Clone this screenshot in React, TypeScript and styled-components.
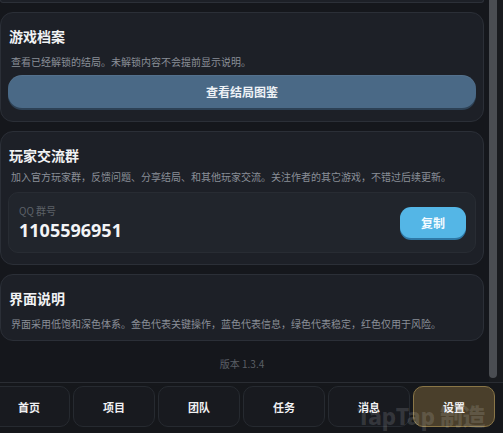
import React from "react";
import styled, { createGlobalStyle } from "styled-components";

const Global = createGlobalStyle`
  html, body { margin: 0; padding: 0; background: #15171c; }
  body { font-family: "Noto Sans CJK SC", "Noto Sans", sans-serif; color: #eef0f3; }
  * { box-sizing: border-box; }
`;

const Page = styled.div`
  width: 503px;
  height: 433px;
  display: flex;
  flex-direction: column;
  background: #15171c;
  position: relative;
  overflow: hidden;
`;

const Body = styled.div`
  height: 382px;
  display: flex;
`;

const Scroller = styled.main`
  flex: 1;
  overflow: hidden;
`;

const Rail = styled.div`
  width: 17px;
  padding: 0 6px 0 3px;
  background: linear-gradient(to right, #15171c 3px, #191b1f 3px);
`;

const Thumb = styled.div`
  height: 378px;
  background: #4a4d52;
  border-radius: 0 0 6px 6px;
`;

const Stack = styled.div`
  display: flex;
  flex-direction: column;
  gap: 9px;
  padding: 0 2px 17px 0;
`;

const CardTail = styled.div`
  height: 3px;
  border: 1px solid #2c3038;
  border-top: none;
  border-radius: 0 0 12px 12px;
  background: #1d2027;
`;

const Card = styled.section`
  background: #1d2027;
  border: 1px solid #2b2f37;
  border-radius: 13px;
  padding: 13px 7px 9px;
  display: flex;
  flex-direction: column;
`;

const Title = styled.h2`
  margin: 0 0 0 1px;
  font-size: 14px;
  line-height: 20px;
  font-weight: 700;
  color: #f1f2f4;
`;

const Desc = styled.p<{ $gap: number }>`
  margin: ${(p) => p.$gap}px 0 0 3px;
  font-size: 10px;
  line-height: 14px;
  color: #8a8f97;
`;

const WideButton = styled.button`
  margin-top: 6px;
  margin-bottom: 4px;
  height: 33px;
  border: none;
  border-radius: 14px;
  background: #4a6986;
  box-shadow: 0 2px 0 #2d4155, inset 0 1px 0 rgba(255,255,255,0.06);
  color: #eef2f6;
  font-family: inherit;
  font-size: 12px;
  font-weight: 700;
  cursor: pointer;
`;

const QQBox = styled.div`
  margin-top: 8px;
  margin-bottom: 2px;
  height: 61px;
  background: #21252c;
  border: 1px solid #282c33;
  border-radius: 10px;
  display: flex;
  align-items: center;
  justify-content: space-between;
  padding: 0 9px 0 10px;
`;

const QQInfo = styled.div`
  display: flex;
  flex-direction: column;
`;

const QQLabel = styled.span`
  font-size: 10px;
  line-height: 14px;
  color: #5c6168;
`;

const QQNumber = styled.span`
  font-size: 18px;
  line-height: 24px;
  font-weight: 700;
  color: #f3f4f6;
  font-family: "Noto Sans", "Noto Sans CJK SC", sans-serif;
`;

const CopyButton = styled.button`
  width: 66px;
  height: 31px;
  margin-bottom: 1px;
  border: none;
  border-radius: 11px;
  background: #54b6e6;
  box-shadow: 0 2px 0 #2e78a6;
  color: #f4fbff;
  font-family: inherit;
  font-size: 12px;
  font-weight: 700;
`;

const Version = styled.div`
  margin-top: 7px;
  text-align: center;
  font-size: 10px;
  line-height: 14px;
  color: #5b5f66;
`;

const Nav = styled.nav`
  flex: 1;
  border-top: 1px solid #2a2d33;
  background: #15171b;
  overflow: hidden;
  padding: 3px 0 6px;
`;

const NavGrid = styled.div`
  margin-left: -12px;
  width: 507px;
  height: 41px;
  display: grid;
  grid-template-columns: repeat(6, 1fr);
  gap: 3px;
`;

const NavButton = styled.button<{ $active?: boolean }>`
  border-radius: 10px;
  border: 1px solid ${(p) => (p.$active ? "#8a7647" : "#262a30")};
  background: ${(p) => (p.$active ? "#4a3f2b" : "#181a1f")};
  color: #f0f1f3;
  font-family: inherit;
  font-size: 11px;
  font-weight: 700;
  padding: 0;
`;

const Watermark = styled.div`
  position: absolute;
  left: 357px;
  top: 398px;
  font-family: "Noto Sans", "Noto Sans CJK SC", sans-serif;
  font-size: 23px;
  font-weight: 800;
  letter-spacing: -0.5px;
  color: rgba(255, 255, 255, 0.13);
  pointer-events: none;
  white-space: nowrap;
`;

const tabs = ["首页", "项目", "团队", "任务", "消息", "设置"];

export default function App() {
  return (
    <>
      <Global />
      <Page>
        <Body>
          <Scroller>
            <Stack>
              <CardTail />
              <Card>
                <Title>游戏档案</Title>
                <Desc $gap={9}>查看已经解锁的结局。未解锁内容不会提前显示说明。</Desc>
                <WideButton>查看结局图鉴</WideButton>
              </Card>
              <Card>
                <Title>玩家交流群</Title>
                <Desc $gap={5}>加入官方玩家群，反馈问题、分享结局、和其他玩家交流。关注作者的其它游戏，不错过后续更新。</Desc>
                <QQBox>
                  <QQInfo>
                    <QQLabel>QQ 群号</QQLabel>
                    <QQNumber>1105596951</QQNumber>
                  </QQInfo>
                  <CopyButton>复制</CopyButton>
                </QQBox>
              </Card>
              <Card>
                <Title>界面说明</Title>
                <Desc $gap={9}>界面采用低饱和深色体系。金色代表关键操作，蓝色代表信息，绿色代表稳定，红色仅用于风险。</Desc>
              </Card>
              <Version>版本 1.3.4</Version>
            </Stack>
          </Scroller>
          <Rail>
            <Thumb />
          </Rail>
        </Body>
        <Nav>
          <NavGrid>
            {tabs.map((t) => (
              <NavButton key={t} $active={t === "设置"}>{t}</NavButton>
            ))}
          </NavGrid>
        </Nav>
        <Watermark>TapTap 制造</Watermark>
      </Page>
    </>
  );
}
